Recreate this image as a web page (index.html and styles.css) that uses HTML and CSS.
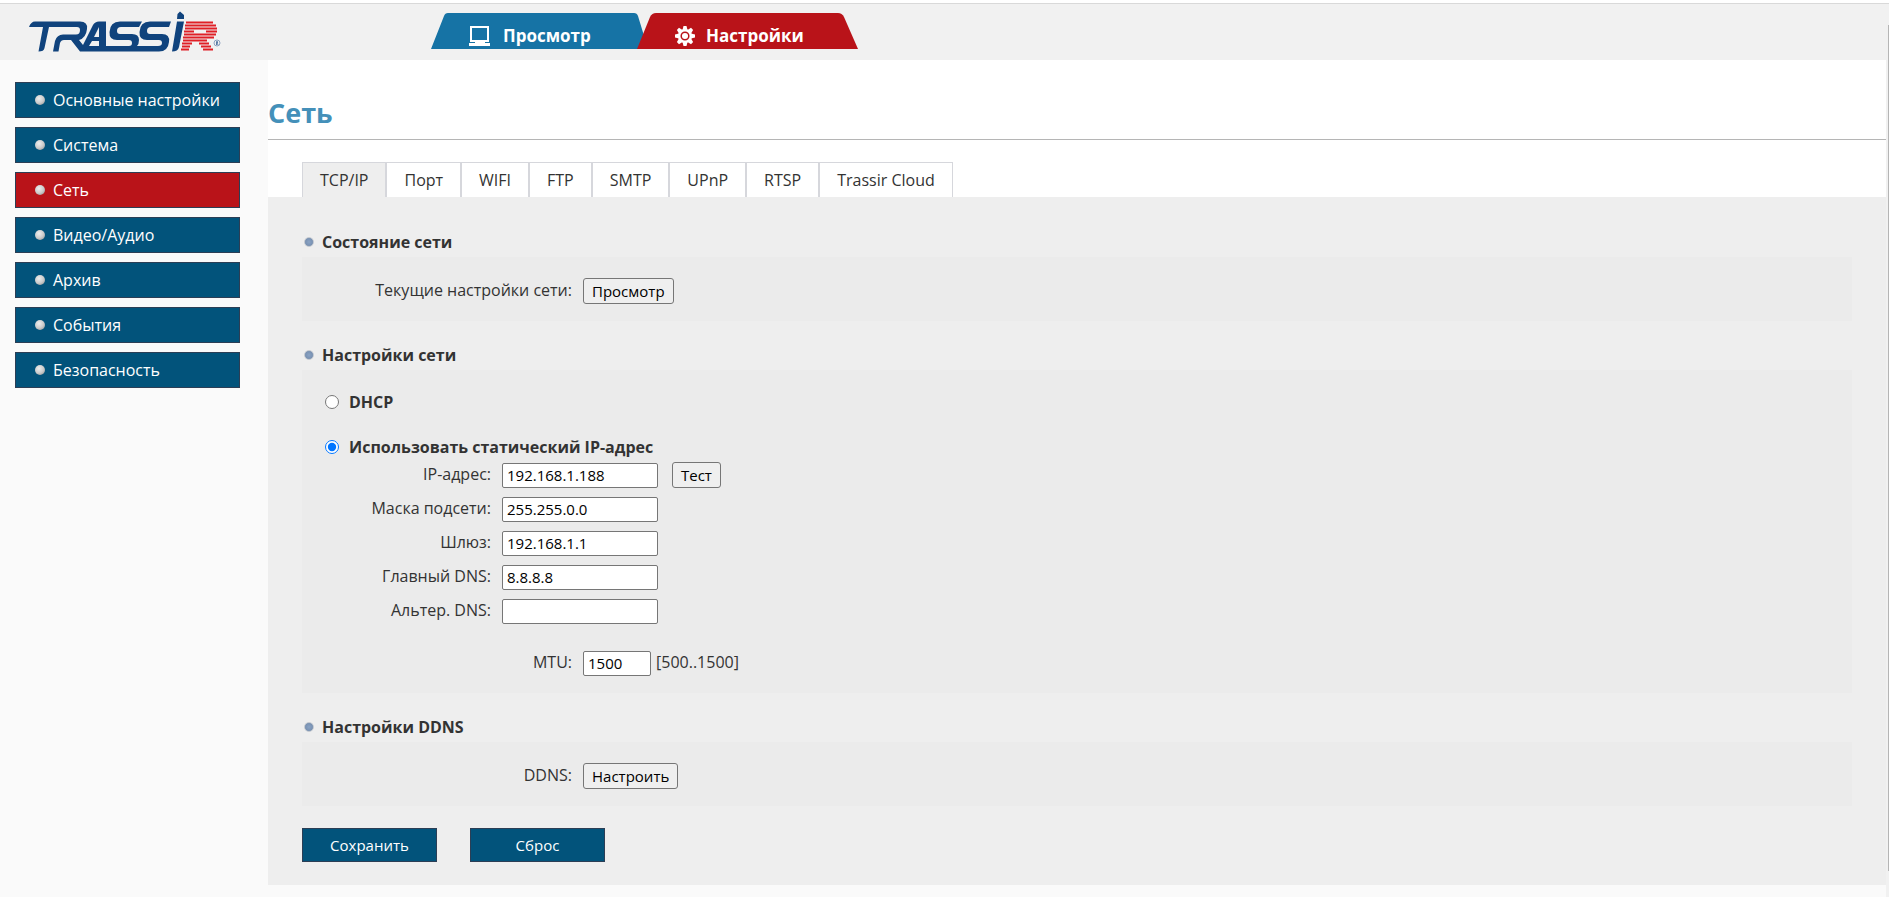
FILE: index.html
```html
<!DOCTYPE html>
<html lang="ru">
<head>
<meta charset="utf-8">
<title>TRASSIR</title>
<link rel="stylesheet" href="styles.css">
</head>
<body>
<header class="header">
  <a class="logo" href="#" aria-label="TRASSIR">
    <svg width="192" height="42" viewBox="29 11 192 42">
      <path fill="#10437d" d="M29 27Q31 21.500 35 21.500H80Q88 21.500 87 29Q86 38 79 40L83 45L93 25Q95 21.500 99 21.500H106V46H129Q132 46 132 43Q132 40 129 40H117Q109 40 109.500 32Q110 21.500 120 21.500H142L139 27H121Q117 27 117 31Q117 34 120 34H132Q139 34 139 40Q139 44 137 46H158Q162 46 162 43Q162 40 159 40H147Q139 40 139.500 32Q140 21.500 150 21.500H171L169 27H151Q147 27 147 31Q147 34 150 34H162Q170 34 169 42Q168 51.500 159 51.500H80L71 40H64Q61 40 60 43L58.500 51.500H53L55 41Q57 34.500 63 34.500H76Q80 34.500 80 30Q80 27 77 27H49L44.500 48Q44 51.500 38.500 51.500L43 27ZM99 27L94 37H99ZM92 41L89 46H99V41Z"/>
      <path fill="#10437d" d="M177 21.500H184L179 47Q178 51.500 172 51.500ZM177.500 14L180 11.500L184 15V19H177Z"/>
      <path fill="none" stroke="#e01f26" stroke-width="2" d="M186 22.500H213M185 25.500H216M185 28.500H217M184 31.500H194M206 31.500H217M184 34.500H216M183 37.500H214M183 40.500H207M182 43.500H192M199 43.500H209M182 46.500H190M201 46.500H211M181 49.500H189M203 49.500H213"/>
      <circle cx="217" cy="43" r="3" fill="none" stroke="#8ba2c0"/>
      <path fill="none" stroke="#5b7ba5" d="M216.500 45V41.500H217.500V43.500L218 45"/>
    </svg>
  </a>
  <nav class="modes">
    <a class="mode mode-view" href="#">
      <svg class="mode-shape" width="217" height="36" viewBox="0 0 217 36"><path fill="#1673a5" d="M0 36L13 3Q14 0 17 0H203Q206 0 207 3L217 36Z"/></svg>
      <svg class="mode-icon" width="22" height="20" viewBox="0 0 22 20"><path fill="none" stroke="#fff" stroke-width="2" d="M2 1H19V15H2Z"/><path fill="#fff" d="M6 15H16V17H21V20H0V17H6Z"/></svg>
      <span>Просмотр</span>
    </a>
    <a class="mode mode-settings" href="#">
      <svg class="mode-shape" width="221" height="36" viewBox="0 0 221 36"><path fill="#b91319" d="M0 36L13 4Q15 0 19 0H201Q205 0 207 4L221 36Z"/></svg>
      <svg class="mode-icon" width="20" height="20" viewBox="-10 -10 20 20"><g fill="#fff"><circle r="7"/><path id="tooth" d="M-1.500 -10H1.500L2.500 -6H-2.500Z"/><use href="#tooth" transform="rotate(45)"/><use href="#tooth" transform="rotate(90)"/><use href="#tooth" transform="rotate(135)"/><use href="#tooth" transform="rotate(180)"/><use href="#tooth" transform="rotate(225)"/><use href="#tooth" transform="rotate(270)"/><use href="#tooth" transform="rotate(315)"/></g><circle r="3.800" fill="none" stroke="#b91319" stroke-width="1.500"/></svg>
      <span>Настройки</span>
    </a>
  </nav>
</header>
<div class="page">
  <nav class="sidebar">
    <a class="menu-item" href="#">Основные настройки</a>
    <a class="menu-item" href="#">Система</a>
    <a class="menu-item current" href="#">Сеть</a>
    <a class="menu-item" href="#">Видео/Аудио</a>
    <a class="menu-item" href="#">Архив</a>
    <a class="menu-item" href="#">События</a>
    <a class="menu-item" href="#">Безопасность</a>
  </nav>
  <main class="content">
    <h1 class="title">Сеть</h1>
    <nav class="tabs">
      <a class="tab current" href="#">TCP/IP</a>
      <a class="tab" href="#">Порт</a>
      <a class="tab" href="#">WIFI</a>
      <a class="tab" href="#">FTP</a>
      <a class="tab" href="#">SMTP</a>
      <a class="tab" href="#">UPnP</a>
      <a class="tab" href="#">RTSP</a>
      <a class="tab" href="#">Trassir Cloud</a>
    </nav>
    <form class="panel">
      <h2 class="section-title">Состояние сети</h2>
      <section class="box">
        <div class="row wide"><label for="view">Текущие настройки сети:</label><button class="btn" id="view" type="button">Просмотр</button></div>
      </section>
      <h2 class="section-title">Настройки сети</h2>
      <section class="box network">
        <label class="choice"><input type="radio" name="mode">DHCP</label>
        <label class="choice static"><input type="radio" name="mode" checked>Использовать статический IP-адрес</label>
        <div class="fields">
          <div class="row"><label for="ip">IP-адрес:</label><input class="text" id="ip" value="192.168.1.188"><button class="btn test" type="button">Тест</button></div>
          <div class="row"><label for="mask">Маска подсети:</label><input class="text" id="mask" value="255.255.0.0"></div>
          <div class="row"><label for="gw">Шлюз:</label><input class="text" id="gw" value="192.168.1.1"></div>
          <div class="row"><label for="dns1">Главный DNS:</label><input class="text" id="dns1" value="8.8.8.8"></div>
          <div class="row"><label for="dns2">Альтер. DNS:</label><input class="text" id="dns2"></div>
        </div>
        <div class="row wide"><label for="mtu">MTU:</label><input class="text short" id="mtu" value="1500"><span class="hint">[500..1500]</span></div>
      </section>
      <h2 class="section-title">Настройки DDNS</h2>
      <section class="box">
        <div class="row wide"><label for="ddns">DDNS:</label><button class="btn" id="ddns" type="button">Настроить</button></div>
      </section>
      <div class="actions">
        <button class="action" type="submit">Сохранить</button>
        <button class="action" type="reset">Сброс</button>
      </div>
    </form>
  </main>
</div>
<div class="scroll-edge"></div>
</body>
</html>
```

FILE: styles.css
```css
* { box-sizing: border-box; }
body {
  margin: 0;
  min-height: 100vh;
  display: flex;
  flex-direction: column;
  background: #f1f1f1;
  color: #333;
  font: 16px/24px "Segoe UI", "Open Sans", "Noto Sans", sans-serif;
}
a { color: inherit; text-decoration: none; }
.header {
  display: flex;
  height: 60px;
  border-top: 3px solid #fff;
  box-shadow: inset 0 1px #d9d9d9;
}
.logo { width: 431px; padding: 8px 0 0 29px; }
.logo svg { display: block; }
.modes { display: flex; padding-top: 10px; }
.mode {
  position: relative;
  display: flex;
  align-items: center;
  height: 36px;
  padding-top: 9px;
  color: #fff;
  font-size: 17px;
  font-weight: 700;
}
.mode-view { width: 206px; padding-left: 38px; gap: 12px; }
.mode-settings { width: 221px; padding-left: 38px; gap: 11px; }
.mode-shape { position: absolute; left: 0; top: 0; }
.mode-icon, .mode span { position: relative; }
.page { display: flex; flex: 1; margin-right: 3px; background: #fafafa; }
.sidebar {
  display: flex;
  flex-direction: column;
  gap: 9px;
  width: 268px;
  padding: 22px 28px 0 15px;
}
.menu-item {
  display: flex;
  align-items: center;
  gap: 8px;
  height: 36px;
  padding-left: 19px;
  border: 1px solid #2c3e55;
  background: #02537b;
  color: #fff;
}
.menu-item.current { background: #b91319; }
.menu-item::before, .section-title::before {
  content: "";
  width: 10px;
  height: 10px;
  border-radius: 50%;
  background: radial-gradient(circle at 40% 35%, #eee, #ccc 50%, #888);
}
.content { flex: 1; background: #fff; margin-bottom: 12px; }
.title {
  margin: 0;
  padding: 33px 0 6px;
  border-bottom: 1px solid #b5b5b5;
  color: #4490b9;
  font-size: 27px;
  line-height: 40px;
}
.tabs { display: flex; padding: 22px 0 0 34px; }
.tab {
  height: 35px;
  padding: 5px 17px;
  border: 1px solid #d6d7dc;
  border-bottom: 0;
}
.tab.current { background: #eee; }
.panel { padding: 32px 34px 23px; background: #eee; }
.section-title {
  display: flex;
  align-items: center;
  gap: 8px;
  margin: 0;
  padding: 1px 2px 3px;
  font-size: 16px;
}
.section-title::before {
  box-sizing: border-box;
  border: 1px solid #c3c8cf;
  background: radial-gradient(circle, #8aa3c4, #6f87a8);
}
.box { padding: 21px 0 17px; margin-bottom: 21px; background: #ebebeb; }
.box.network { padding: 20px 0 17px; }
.row { display: flex; align-items: center; height: 26px; }
.row label { width: 189px; margin-right: 11px; padding-bottom: 2px; text-align: right; }
.row.wide label { width: 270px; }
.text {
  width: 156px;
  height: 25px;
  padding: 1px 4px;
  border: 1px solid #767676;
  border-radius: 2px;
  background: #fff;
  color: #000;
  font: inherit;
  font-size: 15px;
}
.text.short { width: 68px; }
.btn {
  height: 26px;
  padding: 0 8px;
  border: 1px solid #767676;
  border-radius: 3px;
  background: #efefef;
  color: #000;
  font: inherit;
  font-size: 15px;
}
.test { margin-left: 14px; }
.hint { margin-left: 5px; padding-bottom: 2px; }
.choice { display: flex; align-items: center; gap: 10px; padding-left: 23px; font-weight: 700; }
.choice input { width: 14px; height: 14px; margin: 0; }
.choice.static { margin-top: 21px; }
.fields { display: grid; gap: 8px; margin: 3px 0 26px; }
.actions { display: flex; gap: 33px; padding-top: 1px; }
.action {
  width: 135px;
  height: 34px;
  border: 1px solid #2c3e55;
  background: #02537b;
  color: #fff;
  font: inherit;
  font-size: 15px;
}
.scroll-edge { position: fixed; right: 0; top: 25px; bottom: 26px; width: 1px; background: #b5b5b5; }
```
